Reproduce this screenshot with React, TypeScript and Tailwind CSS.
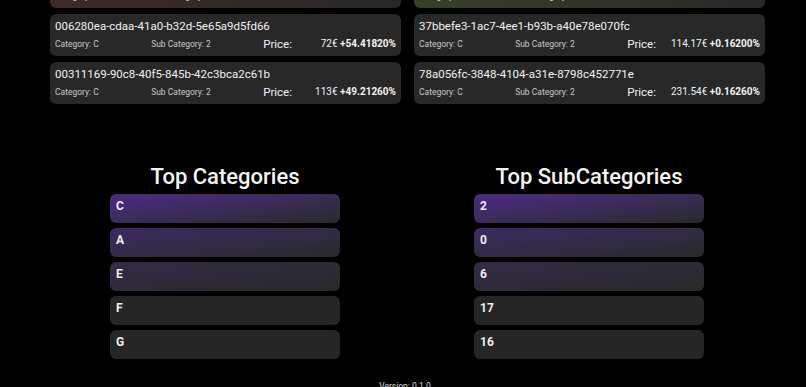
const items = [
  {
    id: "a91c2f04-6b1e-4d2a-9e3f-1c7b5a2e9d40",
    cat: "C",
    sub: "2",
    price: "123€",
    change: "+61.20450%",
    tint: "from-[#3d2a26]",
  },
  {
    id: "5f0e3b7a-2c94-4e8d-a1b6-7d3c9e2f0a18",
    cat: "C",
    sub: "2",
    price: "56.30€",
    change: "+0.16540%",
    tint: "from-[#384026]",
  },
  {
    id: "006280ea-cdaa-41a0-b32d-5e65a9d5fd66",
    cat: "C",
    sub: "2",
    price: "72€",
    change: "+54.41820%",
    tint: "",
  },
  {
    id: "37bbefe3-1ac7-4ee1-b93b-a40e78e070fc",
    cat: "C",
    sub: "2",
    price: "114.17€",
    change: "+0.16200%",
    tint: "",
  },
  {
    id: "00311169-90c8-40f5-845b-42c3bca2c61b",
    cat: "C",
    sub: "2",
    price: "113€",
    change: "+49.21260%",
    tint: "",
  },
  {
    id: "78a056fc-3848-4104-a31e-8798c452771e",
    cat: "C",
    sub: "2",
    price: "231.54€",
    change: "+0.16260%",
    tint: "",
  },
];

const topCats = ["C", "A", "E", "F", "G"];
const topSubs = ["2", "0", "6", "17", "16"];

const rankTint = [
  "bg-linear-to-br from-[#4e2788] to-[#292929]",
  "bg-linear-to-br from-[#3d2965] to-[#292929]",
  "bg-linear-to-br from-[#342a48] to-[#292929]",
  "bg-[#262626]",
  "bg-[#262626]",
];

const ProductCard = ({ item }: { item: (typeof items)[number] }) => (
  <div
    className={`h-[42px] rounded-md px-[5px] pt-[4px] ${
      item.tint ? `bg-linear-to-r ${item.tint} to-[#282828]` : "bg-[#282828]"
    }`}
  >
    <div className="text-[11.5px] leading-[17px] text-[#f2f2f2]">{item.id}</div>
    <div className="flex items-center justify-between leading-[18px]">
      <span className="text-[8.5px] text-[#c8c8c8]">Category: {item.cat}</span>
      <span className="text-[8.5px] text-[#c8c8c8]">Sub Category: {item.sub}</span>
      <div className="flex items-center gap-2">
        <span className="text-[11.5px] text-[#f2f2f2]">Price:</span>
        <span className="min-w-[96px] text-right text-[10px] text-[#f2f2f2]">
          {item.price} <span className="font-bold">{item.change}</span>
        </span>
      </div>
    </div>
  </div>
);

const TopList = ({ title, rows }: { title: string; rows: string[] }) => (
  <div className="flex w-[230px] flex-col">
    <h2 className="mb-[5px] text-center text-[22px] leading-[24px] font-medium text-[#f4f4f4]">
      {title}
    </h2>
    <div className="flex flex-col gap-[5px]">
      {rows.map((r, i) => (
        <div
          key={r}
          className={`h-[29px] rounded-md px-[6px] pt-[5px] text-[12px] leading-[14px] font-bold text-[#eeeeee] ${rankTint[i]}`}
        >
          {r}
        </div>
      ))}
    </div>
  </div>
);

export default function App() {
  return (
    <div
      className="h-[387px] w-[806px] overflow-hidden bg-black"
      style={{ fontFamily: "Roboto, 'Liberation Sans', sans-serif" }}
    >
      <div className="-mt-[34px] ml-[50px] grid w-[715px] grid-cols-2 gap-x-[13px] gap-y-[6px]">
        {items.map((it) => (
          <ProductCard key={it.id} item={it} />
        ))}
      </div>
      <div className="mt-[61px] flex gap-[134px] pl-[110px]">
        <TopList title="Top Categories" rows={topCats} />
        <TopList title="Top SubCategories" rows={topSubs} />
      </div>
      <div className="mt-[21px] pl-[4px] text-center text-[8.5px] text-[#dddddd]">
        Version: 0.1.0
      </div>
    </div>
  );
}
